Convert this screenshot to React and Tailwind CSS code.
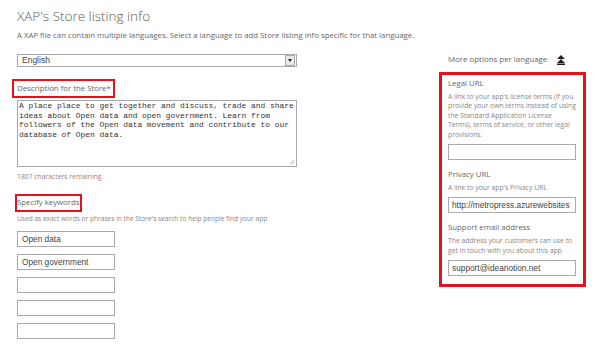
import React from "react";

const sans = { fontFamily: "'Open Sans', 'Noto Sans', sans-serif" };
const arial = { fontFamily: "'Liberation Sans', Arial, sans-serif" };

function Box({ children }) {
  return (
    <div className="w-[98px] h-[16px] border border-[#a9a9a9] bg-white px-[4px] flex items-center">
      <span className="text-[8.3px] text-[#444] whitespace-nowrap" style={arial}>{children}</span>
    </div>
  );
}

export default function App() {
  return (
    <div className="w-[600px] h-[349px] bg-white overflow-hidden flex text-[#666]" style={sans}>
      <div className="w-[420px] pl-[17px] flex flex-col">
        <h1 className="mt-[6px] text-[13.5px] font-light leading-[20px] text-[#5a5a5a]">XAP's Store listing info</h1>
        <p className="mt-[3px] text-[7.8px] leading-[12px] text-[#666] whitespace-nowrap">
          A XAP file can contain multiple languages. Select a language to add Store listing info specific for that language.
        </p>
        <div className="mt-[13px] w-[280px] h-[13px] border border-[#a9a9a9] flex items-center justify-between">
          <span className="pl-[4px] text-[8.5px] text-[#444]" style={arial}>English</span>
          <span className="w-[10px] h-[11px] mr-[1px] border border-[#a9a9a9] bg-[#e9e9e9] flex items-center justify-center">
            <span className="block w-0 h-0 border-l-[2.5px] border-r-[2.5px] border-t-[3px] border-l-transparent border-r-transparent border-t-[#222]"></span>
          </span>
        </div>
        <div className="mt-[12px] -ml-[5px] w-[103px] h-[19px] border-[2px] border-[#e8101b] pl-[3px] flex items-center">
          <span className="text-[7.8px] text-[#666] whitespace-nowrap">Description for the Store*</span>
        </div>
        <div className="mt-[2px] w-[280px] h-[67px] border border-[#a9a9a9] relative px-[1px]">
          <p className="text-[7.9px] leading-[9.6px] text-[#333]" style={{ fontFamily: "'Liberation Mono', 'Courier New', monospace" }}>
            A place place to get together and discuss, trade and share<br />
            ideas about Open data and open government. Learn from<br />
            followers of the Open data movement and contribute to our<br />
            database of Open data.
          </p>
          <svg className="absolute right-[1px] bottom-[1px]" width="6" height="6" viewBox="0 0 6 6">
            <path d="M5 1L1 5M5 3L3 5" stroke="#aaa" strokeWidth="0.8" />
          </svg>
        </div>
        <p className="mt-[4px] text-[6.8px] leading-[12px] text-[#888]">1807 characters remaining.</p>
        <div className="mt-[11px] -ml-[2px] w-[67px] h-[18px] border-[2px] border-[#e8101b] flex items-center">
          <span className="text-[7.8px] text-[#666] whitespace-nowrap">Specify keywords</span>
        </div>
        <p className="mt-[1px] text-[6.6px] leading-[12px] text-[#888] whitespace-nowrap">Used as exact words or phrases in the Store's search to help people find your app</p>
        <div className="mt-[6px] flex flex-col gap-[7px]">
          <Box>Open data</Box>
          <Box>Open government</Box>
          <Box />
          <Box />
          <Box />
        </div>
      </div>
      <div className="ml-[19px] w-[147px] flex flex-col">
        <div className="mt-[53px] h-[14px] flex items-center">
          <span className="ml-[9px] text-[7.9px] text-[#666] whitespace-nowrap">More options per language</span>
          <svg className="ml-[10px]" width="8" height="10" viewBox="0 0 8 10">
            <path d="M4 0L8 4H0Z M4 4L8 8H0Z" fill="#222" />
            <rect x="0" y="8.5" width="8" height="1.5" fill="#222" />
          </svg>
        </div>
        <div className="mt-[5px] h-[215px] border-[3px] border-[#e8101b] pl-[6px] pr-[4px] flex flex-col">
          <p className="mt-[2px] text-[7.8px] leading-[12px] text-[#666]">Legal URL</p>
          <p className="mt-[3px] text-[6.8px] leading-[9.4px] text-[#888] whitespace-nowrap">
            A link to your app's license terms (if you<br />
            provide your own terms instead of using<br />
            the Standard Application License<br />
            Terms), terms of service, or other legal<br />
            provisions.
          </p>
          <div className="mt-[5px] h-[16px] w-[128px] border border-[#a9a9a9]"></div>
          <p className="mt-[8px] text-[7.8px] leading-[12px] text-[#666]">Privacy URL</p>
          <p className="mt-[3px] text-[6.8px] leading-[9.4px] text-[#888] whitespace-nowrap">A link to your app's Privacy URL</p>
          <div className="mt-[5px] h-[16px] w-[128px] border border-[#a9a9a9] px-[3px] flex items-center overflow-hidden">
            <span className="text-[8.3px] text-[#444] whitespace-nowrap" style={arial}>http://metropress.azurewebsites</span>
          </div>
          <p className="mt-[8px] text-[7.8px] leading-[12px] text-[#666]">Support email address</p>
          <p className="mt-[3px] text-[6.8px] leading-[9.4px] text-[#888] whitespace-nowrap">
            The address your customers can use to<br />
            get in touch with you about this app
          </p>
          <div className="mt-[5px] h-[16px] w-[128px] border border-[#a9a9a9] px-[3px] flex items-center">
            <span className="text-[8.3px] text-[#444] whitespace-nowrap" style={arial}>support@ideanotion.net</span>
          </div>
        </div>
      </div>
    </div>
  );
}
